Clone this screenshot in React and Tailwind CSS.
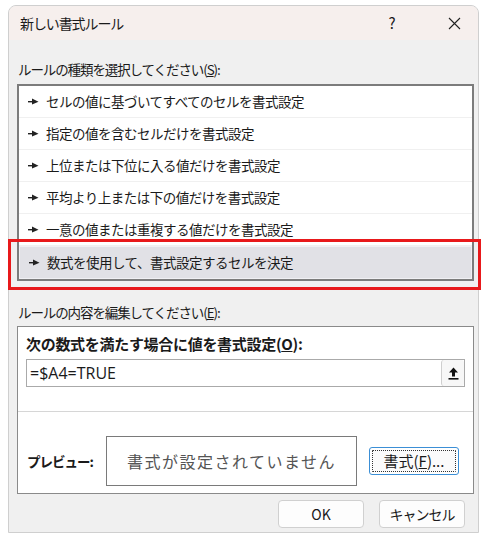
import React from 'react';

const jp = { fontFamily: '"Noto Sans CJK JP", "Noto Sans", sans-serif' };

const rules = [
  'セルの値に基づいてすべてのセルを書式設定',
  '指定の値を含むセルだけを書式設定',
  '上位または下位に入る値だけを書式設定',
  '平均より上または下の値だけを書式設定',
  '一意の値または重複する値だけを書式設定',
  '数式を使用して、書式設定するセルを決定',
];

function Arrow() {
  return (
    <svg width="11" height="7" viewBox="0 0 11 7" className="shrink-0">
      <rect x="0" y="3" width="5" height="1.4" fill="#222" />
      <path d="M4 0.5 L10.5 3.7 L4 6.5 Z" fill="#222" />
    </svg>
  );
}

function UploadIcon() {
  return (
    <svg width="11" height="13" viewBox="0 0 11 13">
      <path d="M5.5 0.5 L10 5.5 L7 5.5 L7 9.5 L4 9.5 L4 5.5 L1 5.5 Z" fill="#111" />
      <rect x="0.5" y="11" width="10" height="1.6" fill="#111" />
    </svg>
  );
}

export default function App() {
  return (
    <div className="relative w-[482px] h-[546px] bg-white overflow-hidden" style={jp}>
      <div className="absolute left-[8px] top-[5px] w-[471px] h-[528px] bg-[#f0f0f0] rounded-tl-[8px] rounded-tr-[8px] border border-[#cfcfcf] overflow-hidden">
        {/* title bar */}
        <div className="h-[34px] bg-[#f6efed] flex items-center pl-[11px] pr-[14px] text-[14px] text-[#1a1a1a]">
          <span className="flex-1 tracking-[-1.1px]">新しい書式ルール</span>
          <span className="w-[20px] text-center mr-[46px] text-[15px]">?</span>
          <svg width="13" height="13" viewBox="0 0 13 13" className="mr-[3px]">
            <path d="M1 1 L12 12 M12 1 L1 12" stroke="#222" strokeWidth="1.1" />
          </svg>
        </div>

        {/* body */}
        <div className="px-[8px] pt-[19px] text-[#1a1a1a]">
          <div className="text-[13.5px] leading-[20px] pl-[1px] tracking-[-1.1px]">
            ルールの種類を選択してください(<span className="underline">S</span>):
          </div>
          <div className="mt-[5px] w-[457px] border-2 border-[#7c7c7c] bg-white">
            {rules.map((r, i) => (
              <div
                key={r}
                className={
                  i === rules.length - 1
                    ? 'h-[33px] flex items-center gap-[7px] pl-[9px] text-[13.5px] tracking-[-0.5px] bg-[#e1e1e6] border border-[#f0f0f4]'
                    : 'h-[32px] flex items-center gap-[7px] pl-[9px] text-[13.5px] tracking-[-0.5px] border-b border-[#f0f0f0]'
                }
              >
                <Arrow />
                <span>{r}</span>
              </div>
            ))}
          </div>

          <div className="mt-[21px] text-[13.5px] leading-[20px] pl-[1px] tracking-[-1.1px]">
            ルールの内容を編集してください(<span className="underline">E</span>):
          </div>
          <div className="mt-[4px] w-[457px] h-[168px] border border-[#8a8a8a] bg-white flex flex-col">
            <div className="px-[8px] pt-[7px]">
              <div className="text-[15px] font-bold leading-[20px] tracking-[-0.3px]">
                次の数式を満たす場合に値を書式設定(<span className="underline">O</span>):
              </div>
              <div className="mt-[5px] h-[28px] border border-[#aaaaaa] flex items-center">
                <span className="flex-1 pl-[3px] text-[16px]" style={{ fontFamily: '"Open Sans", "Noto Sans", sans-serif' }}>
                  =$A4=TRUE
                </span>
                <div className="w-[23px] h-[26px] bg-[#f7f7f7] border-l border-[#cfcfcf] rounded-[3px] flex items-center justify-center">
                  <UploadIcon />
                </div>
              </div>
            </div>
            <div className="mt-[24px] border-t border-[#d6d6d6]" />
            <div className="flex items-center pl-[9px] mt-[24px]">
              <span className="w-[79px] font-bold text-[13.5px] tracking-[-1px]">プレビュー:</span>
              <div className="w-[251px] h-[50px] border border-[#7a7a7a] flex items-center justify-center text-[16px] text-[#555] tracking-[1.5px]">
                書式が設定されていません
              </div>
              <div className="ml-[12px] w-[90px] h-[28px] rounded-[3px] border border-[#3b8fd6] flex items-center justify-center p-[2px]">
                <div className="w-full h-full border border-dotted border-[#333] rounded-[1px] flex items-center justify-center text-[15px] bg-[#fbfbfb]">
                  書式(<span className="underline">F</span>)...
                </div>
              </div>
            </div>
          </div>

          <div className="mt-[6px] flex justify-end gap-[15px] pr-[5px]">
            <div className="w-[86px] h-[28px] bg-[#fdfdfd] border border-[#d0d0d0] rounded-[4px] flex items-center justify-center text-[14px]">
              OK
            </div>
            <div className="w-[86px] h-[28px] bg-[#fdfdfd] border border-[#d0d0d0] rounded-[4px] flex items-center justify-center text-[14px] tracking-[-1px]">
              キャンセル
            </div>
          </div>
        </div>
      </div>

      {/* red highlight annotation */}
      <div className="absolute left-[8px] top-[239px] w-[473px] h-[51px] border-[3px] border-[#e8191b]" />
    </div>
  );
}
